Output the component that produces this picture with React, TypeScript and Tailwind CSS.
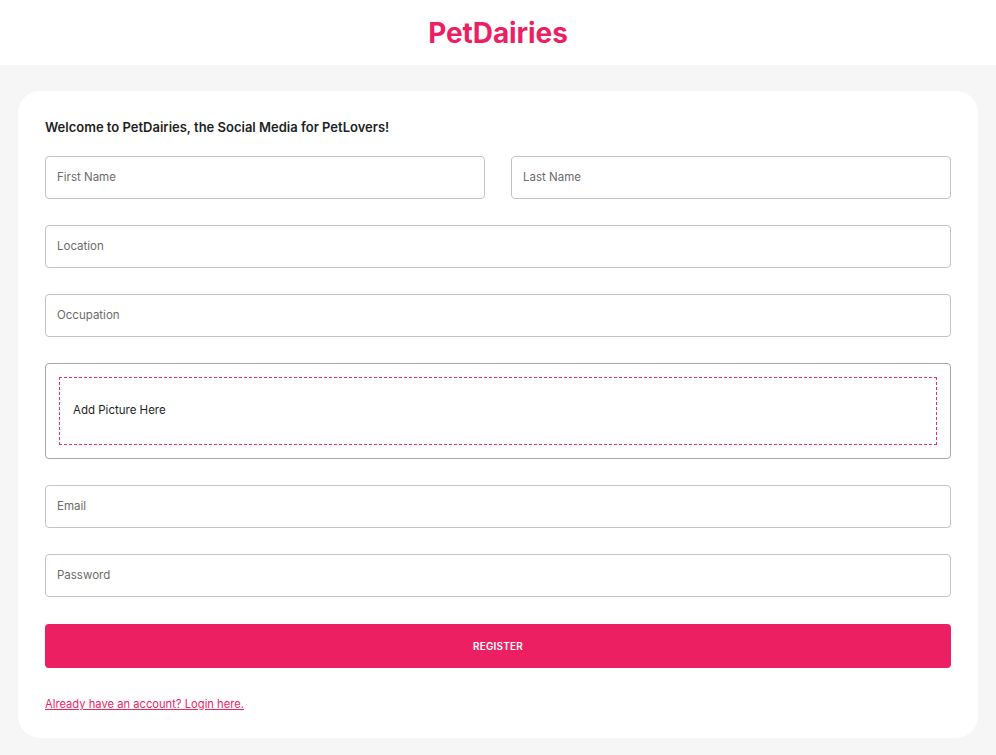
import React from "react";

const font = { fontFamily: "Inter, 'Liberation Sans', sans-serif" };

function Field({ label }: { label: string }) {
  return (
    <div className="flex h-[43px] w-full items-center rounded-[4px] border border-[#c4c4c4] bg-white px-[11px]">
      <span className="text-[11.5px] text-[#6b6b6b]">{label}</span>
    </div>
  );
}

export default function App() {
  return (
    <div className="min-h-[755px] bg-[#f6f6f6]" style={font}>
      <header className="flex h-[65px] items-center justify-center bg-white">
        <h1 className="text-[28px] font-bold tracking-[-0.1px] text-[#ec1f63]">PetDairies</h1>
      </header>

      <main className="px-[18px] pt-[26px] pb-[17px]">
        <div className="flex flex-col rounded-[22px] bg-white px-[27px] pt-[27px] pb-[26px]">
          <h2 className="text-[13px] leading-[18px] font-semibold text-[#1f1f1f]">
            Welcome to PetDairies, the Social Media for PetLovers!
          </h2>

          <div className="mt-[20px] flex flex-col gap-[26px]">
            <div className="grid grid-cols-2 gap-[26px]">
              <Field label="First Name" />
              <Field label="Last Name" />
            </div>
            <Field label="Location" />
            <Field label="Occupation" />

            <div className="rounded-[4px] border border-[#a8a8a8] p-[13px]">
              <div className="flex h-[68px] items-center border border-dashed border-[#e0336f] px-[13px]">
                <span className="text-[11.5px] text-[#1f1f1f]">Add Picture Here</span>
              </div>
            </div>

            <Field label="Email" />
            <Field label="Password" />

            <button className="mt-[1px] h-[44px] w-full rounded-[4px] bg-[#ec1f63] text-[10px] font-semibold tracking-[0.2px] text-white">
              REGISTER
            </button>
          </div>

          <a className="mt-[28px] self-start text-[11.2px] leading-[16px] text-[#ec1f63] underline">
            Already have an account? Login here.
          </a>
        </div>
      </main>
    </div>
  );
}
